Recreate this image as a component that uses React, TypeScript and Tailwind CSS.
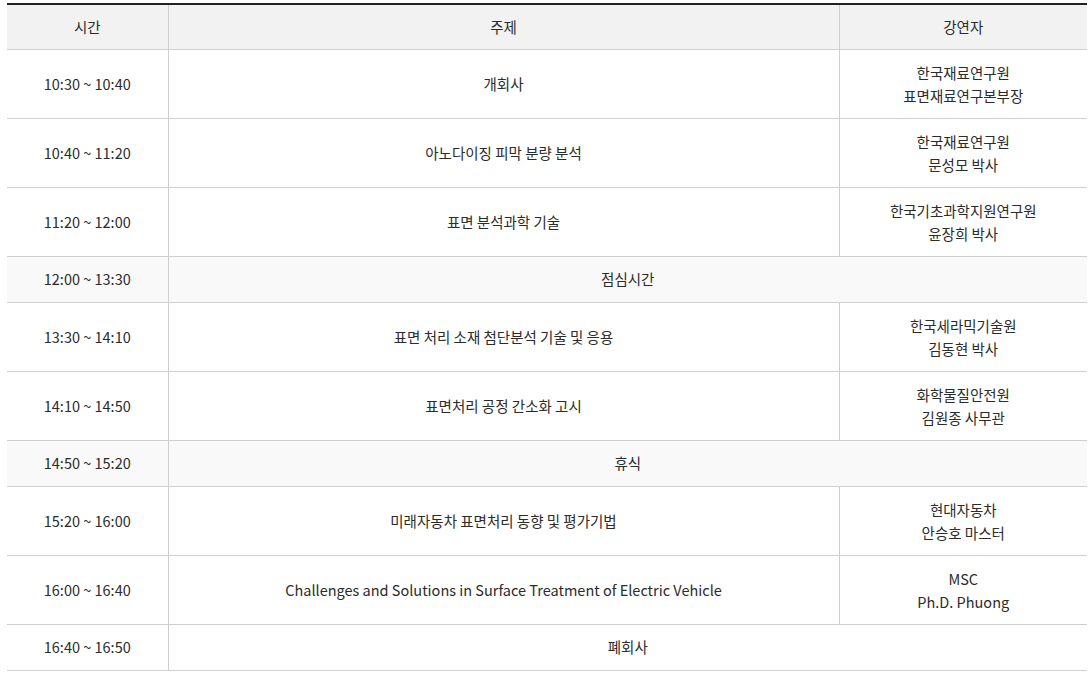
const rows: { time: string; topic: string; speaker?: string[] }[] = [
  { time: "10:30 ~ 10:40", topic: "개회사", speaker: ["한국재료연구원", "표면재료연구본부장"] },
  { time: "10:40 ~ 11:20", topic: "아노다이징 피막 분량 분석", speaker: ["한국재료연구원", "문성모 박사"] },
  { time: "11:20 ~ 12:00", topic: "표면 분석과학 기술", speaker: ["한국기초과학지원연구원", "윤장희 박사"] },
  { time: "12:00 ~ 13:30", topic: "점심시간" },
  { time: "13:30 ~ 14:10", topic: "표면 처리 소재 첨단분석 기술 및 응용", speaker: ["한국세라믹기술원", "김동현 박사"] },
  { time: "14:10 ~ 14:50", topic: "표면처리 공정 간소화 고시", speaker: ["화학물질안전원", "김원종 사무관"] },
  { time: "14:50 ~ 15:20", topic: "휴식" },
  { time: "15:20 ~ 16:00", topic: "미래자동차 표면처리 동향 및 평가기법", speaker: ["현대자동차", "안승호 마스터"] },
  {
    time: "16:00 ~ 16:40",
    topic: "Challenges and Solutions in Surface Treatment of Electric Vehicle",
    speaker: ["MSC", "Ph.D. Phuong"],
  },
  { time: "16:40 ~ 16:50", topic: "폐회사" },
];

export default function App() {
  return (
    <div className="min-h-screen bg-white pt-[3px] pl-[7px] font-['Noto_Sans_CJK_KR','Noto_Sans',sans-serif] text-[14.5px] text-[#2b2b2b]">
      <table className="w-[1080px] table-fixed border-collapse border-t-2 border-t-[#222]">
        <colgroup>
          <col className="w-[161px]" />
          <col className="w-[671px]" />
          <col className="w-[248px]" />
        </colgroup>
        <thead>
          <tr className="h-[45px] bg-[#f2f2f2]">
            <th className="border-b border-[#cfcfcf] font-normal">시간</th>
            <th className="border-b border-l border-[#cfcfcf] font-normal">주제</th>
            <th className="border-b border-l border-[#cfcfcf] font-normal">강연자</th>
          </tr>
        </thead>
        <tbody>
          {rows.map((r) =>
            r.speaker ? (
              <tr key={r.time} className="h-[69px]">
                <td className="border-b border-[#cfcfcf] text-center">{r.time}</td>
                <td className="border-b border-l border-[#cfcfcf] text-center">{r.topic}</td>
                <td className="border-b border-l border-[#cfcfcf] text-center leading-[23px]">
                  {r.speaker.map((s) => (
                    <div key={s}>{s}</div>
                  ))}
                </td>
              </tr>
            ) : (
              <tr key={r.time} className={r.topic === "폐회사" ? "h-[46px]" : "h-[46px] bg-[#f9f9f9]"}>
                <td className="border-b border-[#cfcfcf] text-center">{r.time}</td>
                <td colSpan={2} className="border-b border-l border-[#cfcfcf] text-center">
                  {r.topic}
                </td>
              </tr>
            )
          )}
        </tbody>
      </table>
    </div>
  );
}
